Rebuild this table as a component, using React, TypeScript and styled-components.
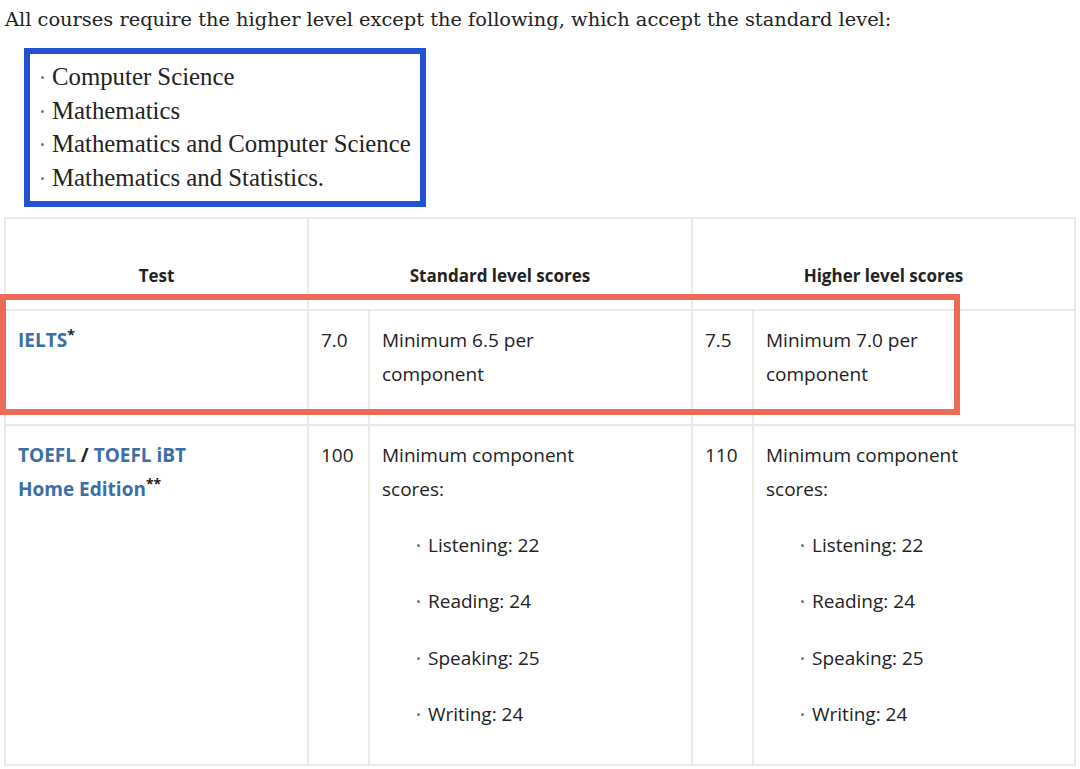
import styled, { createGlobalStyle } from "styled-components";

const GlobalStyle = createGlobalStyle`
  html, body {
    margin: 0;
    background: #ffffff;
  }
`;

const Page = styled.div`
  padding: 0 4px;
  width: 1072px;
  color: #222222;
`;

const Intro = styled.p`
  margin: 0;
  padding: 4px 0 0 1px;
  font-family: "DejaVu Serif", serif;
  font-size: 19.4px;
  line-height: 32px;
  white-space: nowrap;
`;

const CourseList = styled.ul`
  list-style: none;
  margin: 12px 0 0 20px;
  padding: 6px 9px 6px 9px;
  width: fit-content;
  border: 6px solid #2352d0;
`;

const CourseItem = styled.li`
  position: relative;
  padding-left: 13px;
  font-family: "Liberation Serif", serif;
  font-size: 24.8px;
  line-height: 33.7px;
  color: #222222;
  &::before {
    content: "";
    position: absolute;
    left: 2px;
    top: 16px;
    width: 3px;
    height: 3px;
    border-radius: 50%;
    background: #777777;
  }
`;

const TableWrap = styled.div`
  position: relative;
  margin-top: 10px;
`;

const Table = styled.table`
  width: 1072px;
  border-collapse: collapse;
  table-layout: fixed;
  font-family: "Open Sans", sans-serif;
  font-size: 19px;
  line-height: 34px;
  color: #222222;
  td,
  th {
    border: 2px solid #ebe9e4;
  }
`;

const HeadCell = styled.th`
  height: 74px;
  padding: 0 12px 16px;
  vertical-align: bottom;
  text-align: center;
  font-size: 17px;
  font-weight: 700;
  color: #222222;
`;

const TestCell = styled.td`
  padding: 12px 70px 33px 12px;
  vertical-align: top;
  font-weight: 700;
  font-size: 19px;
`;

const TestLink = styled.span`
  color: #3a6ea5;
`;

const Mark = styled.sup`
  font-size: 14px;
  line-height: 0;
  color: #222222;
`;

const NumCell = styled.td`
  padding: 12px 12px 33px;
  vertical-align: top;
`;

const NoteCell = styled.td`
  padding: 12px 60px 33px 12px;
  vertical-align: top;
`;

const PartList = styled.ul`
  list-style: none;
  margin: 0;
  padding: 0 0 0 46px;
`;

const PartItem = styled.li`
  position: relative;
  margin-top: 22.3px;
  &::before {
    content: "";
    position: absolute;
    left: -11px;
    top: 16px;
    width: 3px;
    height: 3px;
    border-radius: 50%;
    background: #777777;
  }
`;

const Highlight = styled.div`
  position: absolute;
  left: -4px;
  top: 77px;
  width: 960px;
  height: 121px;
  box-sizing: border-box;
  border: 6px solid #ee6b5a;
  pointer-events: none;
`;

type Score = {
  value: string;
  note: string;
  parts?: string[];
};

type Row = {
  test: React.ReactNode;
  standard: Score;
  higher: Score;
};

const toeflParts = ["Listening: 22", "Reading: 24", "Speaking: 25", "Writing: 24"];

const rows: Row[] = [
  {
    test: (
      <>
        <TestLink>IELTS</TestLink>
        <Mark>*</Mark>
      </>
    ),
    standard: { value: "7.0", note: "Minimum 6.5 per component" },
    higher: { value: "7.5", note: "Minimum 7.0 per component" },
  },
  {
    test: (
      <>
        <TestLink>TOEFL</TestLink> / <TestLink>TOEFL iBT</TestLink>
        <br />
        <TestLink>Home Edition</TestLink>
        <Mark>**</Mark>
      </>
    ),
    standard: { value: "100", note: "Minimum component scores:", parts: toeflParts },
    higher: { value: "110", note: "Minimum component scores:", parts: toeflParts },
  },
];

const courses = [
  "Computer Science",
  "Mathematics",
  "Mathematics and Computer Science",
  "Mathematics and Statistics.",
];

const ScoreCells = ({ score }: { score: Score }) => (
  <>
    <NumCell>{score.value}</NumCell>
    <NoteCell>
      {score.note}
      {score.parts ? (
        <PartList>
          {score.parts.map((p) => (
            <PartItem key={p}>{p}</PartItem>
          ))}
        </PartList>
      ) : null}
    </NoteCell>
  </>
);

const App = () => {
  return (
    <Page>
      <GlobalStyle />
      <Intro>
        All courses require the higher level except the following, which accept the standard level:
      </Intro>
      <CourseList>
        {courses.map((c) => (
          <CourseItem key={c}>{c}</CourseItem>
        ))}
      </CourseList>
      <TableWrap>
        <Table>
          <colgroup>
            <col style={{ width: 303 }} />
            <col style={{ width: 61 }} />
            <col style={{ width: 323 }} />
            <col style={{ width: 61 }} />
            <col />
          </colgroup>
          <thead>
            <tr>
              <HeadCell>Test</HeadCell>
              <HeadCell colSpan={2}>Standard level scores</HeadCell>
              <HeadCell colSpan={2}>Higher level scores</HeadCell>
            </tr>
          </thead>
          <tbody>
            {rows.map((r, i) => (
              <tr key={i}>
                <TestCell>{r.test}</TestCell>
                <ScoreCells score={r.standard} />
                <ScoreCells score={r.higher} />
              </tr>
            ))}
          </tbody>
        </Table>
        <Highlight />
      </TableWrap>
    </Page>
  );
};

export default App;
